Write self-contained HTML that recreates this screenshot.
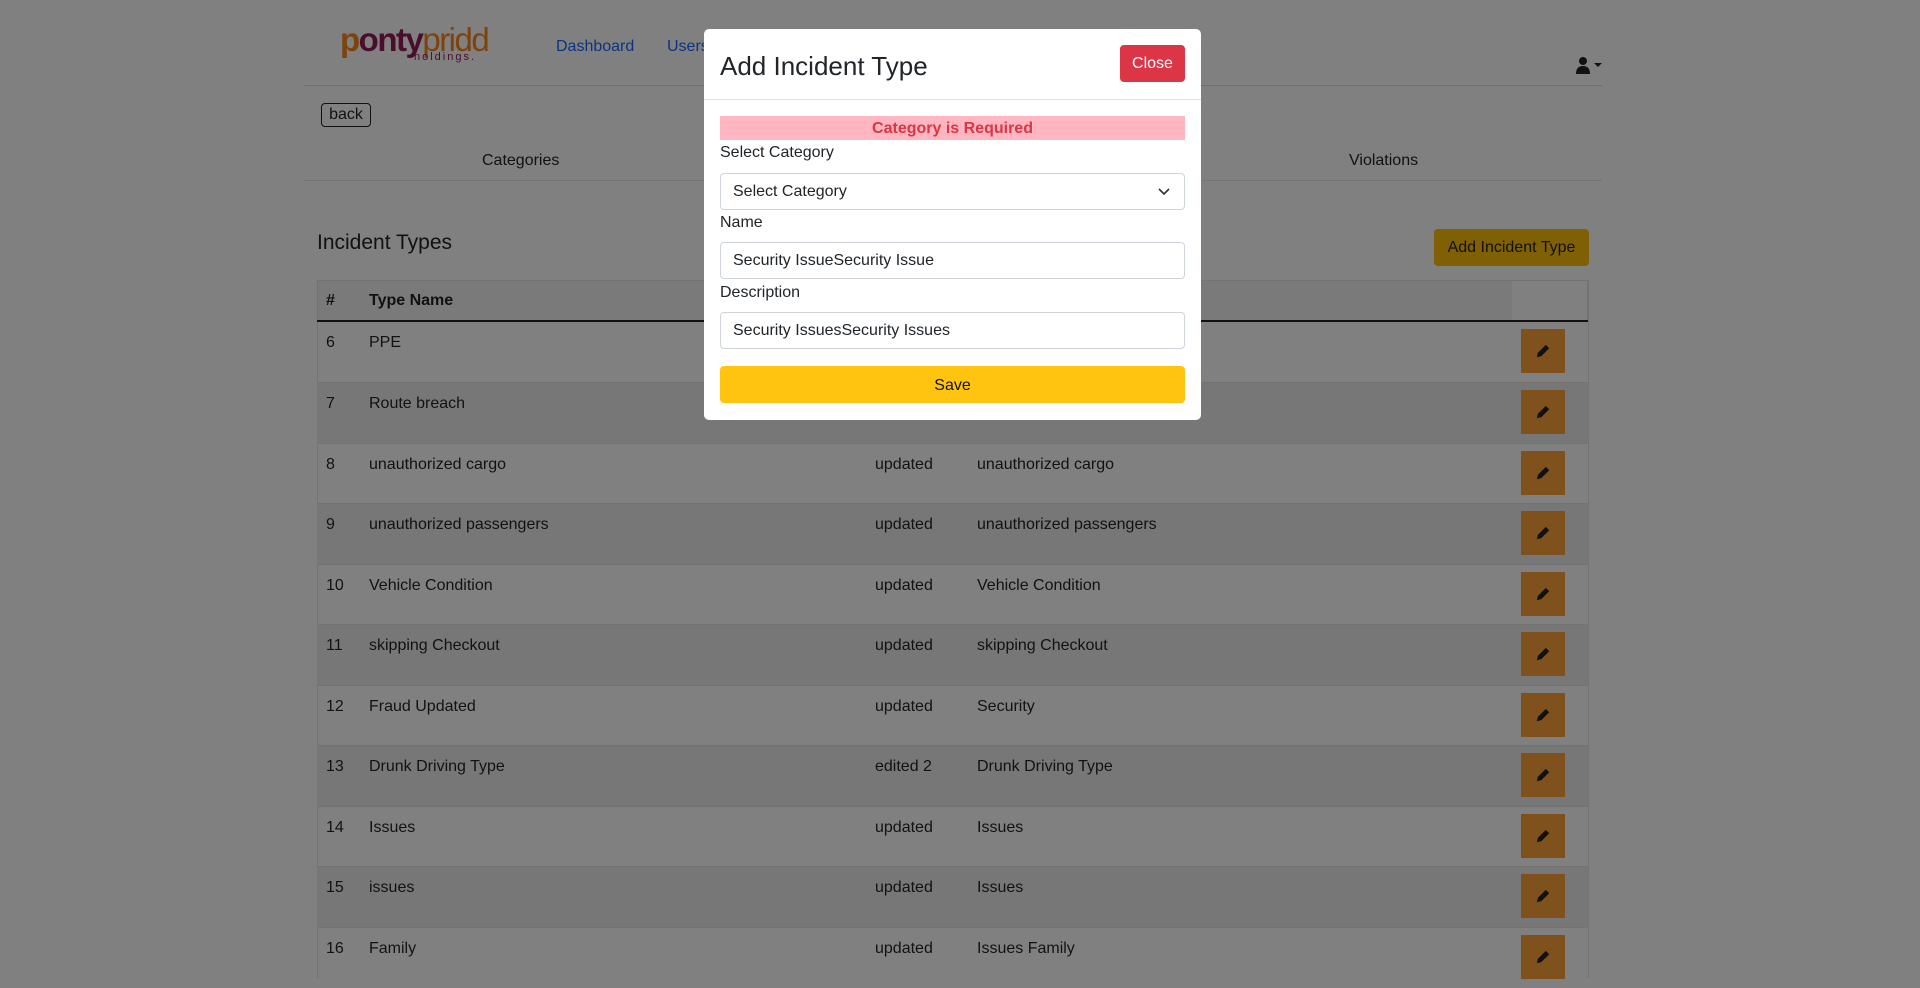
<!DOCTYPE html>
<html><head><meta charset="utf-8">
<style>
*{box-sizing:border-box;margin:0;padding:0}
body{width:1920px;height:978px;overflow:hidden;background:#808080;font-family:"Liberation Sans",sans-serif;color:#111;font-size:16px;position:relative}
.abs{position:absolute}
.nav a{color:#0a3480;text-decoration:none;font-size:16px}
.row{position:absolute;left:317px;width:1271px;height:61px;border-top:1px solid #737373}
.row span{position:absolute;top:12px;font-size:16px;color:#121212}
.edit{position:absolute;left:1204px;top:7px;width:44px;height:44px;background:#7f521d}
.edit svg{position:absolute;left:13px;top:13px}
.modal{position:absolute;left:704px;top:29px;width:497px;height:391px;background:#fff;border-radius:5px}
.lbl{position:absolute;left:16px;font-size:16px;color:#212529}
.inp{position:absolute;left:16px;width:465px;height:37px;border:1px solid #ced4da;border-radius:4px;padding:0 12px;line-height:35px;font-size:16px;color:#212529}
</style></head><body>
<div class="abs" style="left:340px;top:22px;font-size:33px;letter-spacing:-1.5px;line-height:36px">
<span style="color:#7e420c;font-weight:bold">p</span><span style="color:#4a0d2c;font-weight:bold">onty</span><span style="color:#7e420c">pridd</span></div>
<div class="abs" style="left:414px;top:51px;font-size:11px;color:#4a0d2c;letter-spacing:2px;line-height:12px">holdings.</div>
<div class="abs nav" style="left:556px;top:38px"><a>Dashboard</a></div>
<div class="abs nav" style="left:667px;top:38px"><a>Users</a></div>
<svg class="abs" style="left:1575px;top:56px" width="34" height="20" viewBox="0 0 34 20"><circle cx="8" cy="5" r="4" fill="#111"/><path d="M1 18 Q1 10 8 10 Q15 10 15 18Z" fill="#111"/><path d="M19 7 L27 7 L23 11Z" fill="#111"/></svg>
<div class="abs" style="left:304px;top:85px;width:1298px;height:1px;background:#707070"></div>
<div class="abs" style="left:321px;top:103px;width:50px;height:24px;border:1px solid #111;border-radius:4px;font-size:16px;text-align:center;line-height:22px;color:#111">back</div>
<div class="abs" style="left:482px;top:152px;font-size:16px;color:#111">Categories</div>
<div class="abs" style="left:1349px;top:152px;font-size:16px;color:#111">Violations</div>
<div class="abs" style="left:304px;top:180px;width:1298px;height:1px;background:#737373"></div>
<div class="abs" style="left:317px;top:231px;font-size:21px;color:#111">Incident Types</div>
<div class="abs" style="left:1434px;top:229px;width:155px;height:37px;background:#7f6005;border-radius:4px;font-size:16px;line-height:37px;text-align:center;color:#111">Add Incident Type</div>
<div class="abs" style="left:317px;top:280px;width:1271px;height:41px;background:#7a7a7a;border:1px solid #737373;border-bottom:none"></div>
<div class="abs" style="left:1512px;top:281px;width:75px;height:40px;background:#808080"></div>
<div class="abs" style="left:326px;top:292px;font-weight:bold">#</div>
<div class="abs" style="left:369px;top:292px;font-weight:bold">Type Name</div>
<div class="abs" style="left:317px;top:320px;width:1271px;height:2px;background:#111"></div>
<div class="abs" style="left:317px;top:322px;width:1px;height:656px;background:#737373"></div>
<div class="abs" style="left:1588px;top:280px;width:1px;height:698px;background:#737373"></div>

<div class="row" style="top:322px;border-top:none"><span style="left:9px">6</span><span style="left:52px">PPE</span><span style="left:558px">updated</span><span style="left:660px">PPE</span><div class="edit"><svg width="18" height="18" viewBox="0 0 16 16"><path d="M2.5 13.5 L3.5 9.5 L10.5 2.5 L13.5 5.5 L6.5 12.5Z" fill="#111"/></svg></div></div>
<div class="row" style="top:382px;background:#777"><span style="left:9px">7</span><span style="left:52px">Route breach</span><span style="left:558px">updated</span><span style="left:660px">Route breach</span><div class="edit"><svg width="18" height="18" viewBox="0 0 16 16"><path d="M2.5 13.5 L3.5 9.5 L10.5 2.5 L13.5 5.5 L6.5 12.5Z" fill="#111"/></svg></div></div>
<div class="row" style="top:443px"><span style="left:9px">8</span><span style="left:52px">unauthorized cargo</span><span style="left:558px">updated</span><span style="left:660px">unauthorized cargo</span><div class="edit"><svg width="18" height="18" viewBox="0 0 16 16"><path d="M2.5 13.5 L3.5 9.5 L10.5 2.5 L13.5 5.5 L6.5 12.5Z" fill="#111"/></svg></div></div>
<div class="row" style="top:503px;background:#777"><span style="left:9px">9</span><span style="left:52px">unauthorized passengers</span><span style="left:558px">updated</span><span style="left:660px">unauthorized passengers</span><div class="edit"><svg width="18" height="18" viewBox="0 0 16 16"><path d="M2.5 13.5 L3.5 9.5 L10.5 2.5 L13.5 5.5 L6.5 12.5Z" fill="#111"/></svg></div></div>
<div class="row" style="top:564px"><span style="left:9px">10</span><span style="left:52px">Vehicle Condition</span><span style="left:558px">updated</span><span style="left:660px">Vehicle Condition</span><div class="edit"><svg width="18" height="18" viewBox="0 0 16 16"><path d="M2.5 13.5 L3.5 9.5 L10.5 2.5 L13.5 5.5 L6.5 12.5Z" fill="#111"/></svg></div></div>
<div class="row" style="top:624px;background:#777"><span style="left:9px">11</span><span style="left:52px">skipping Checkout</span><span style="left:558px">updated</span><span style="left:660px">skipping Checkout</span><div class="edit"><svg width="18" height="18" viewBox="0 0 16 16"><path d="M2.5 13.5 L3.5 9.5 L10.5 2.5 L13.5 5.5 L6.5 12.5Z" fill="#111"/></svg></div></div>
<div class="row" style="top:685px"><span style="left:9px">12</span><span style="left:52px">Fraud Updated</span><span style="left:558px">updated</span><span style="left:660px">Security</span><div class="edit"><svg width="18" height="18" viewBox="0 0 16 16"><path d="M2.5 13.5 L3.5 9.5 L10.5 2.5 L13.5 5.5 L6.5 12.5Z" fill="#111"/></svg></div></div>
<div class="row" style="top:745px;background:#777"><span style="left:9px">13</span><span style="left:52px">Drunk Driving Type</span><span style="left:558px">edited 2</span><span style="left:660px">Drunk Driving Type</span><div class="edit"><svg width="18" height="18" viewBox="0 0 16 16"><path d="M2.5 13.5 L3.5 9.5 L10.5 2.5 L13.5 5.5 L6.5 12.5Z" fill="#111"/></svg></div></div>
<div class="row" style="top:806px"><span style="left:9px">14</span><span style="left:52px">Issues</span><span style="left:558px">updated</span><span style="left:660px">Issues</span><div class="edit"><svg width="18" height="18" viewBox="0 0 16 16"><path d="M2.5 13.5 L3.5 9.5 L10.5 2.5 L13.5 5.5 L6.5 12.5Z" fill="#111"/></svg></div></div>
<div class="row" style="top:866px;background:#777"><span style="left:9px">15</span><span style="left:52px">issues</span><span style="left:558px">updated</span><span style="left:660px">Issues</span><div class="edit"><svg width="18" height="18" viewBox="0 0 16 16"><path d="M2.5 13.5 L3.5 9.5 L10.5 2.5 L13.5 5.5 L6.5 12.5Z" fill="#111"/></svg></div></div>
<div class="row" style="top:927px"><span style="left:9px">16</span><span style="left:52px">Family</span><span style="left:558px">updated</span><span style="left:660px">Issues Family</span><div class="edit"><svg width="18" height="18" viewBox="0 0 16 16"><path d="M2.5 13.5 L3.5 9.5 L10.5 2.5 L13.5 5.5 L6.5 12.5Z" fill="#111"/></svg></div></div>

<div class="modal">
<div class="abs" style="left:16px;top:22px;font-size:26px;color:#212529">Add Incident Type</div>
<div class="abs" style="left:416px;top:16px;width:65px;height:37px;background:#dc3545;border-radius:4px;color:#fff;font-size:16px;line-height:37px;text-align:center">Close</div>
<div class="abs" style="left:0;top:70px;width:497px;height:1px;background:#dee2e6"></div>
<div class="abs" style="left:16px;top:87px;width:465px;height:24px;background:#ffb6c1;color:#dc3545;font-weight:bold;text-align:center;font-size:16px;line-height:26px">Category is Required</div>
<div class="lbl" style="top:115px">Select Category</div>
<div class="inp" style="top:144px">Select Category<svg style="position:absolute;right:14px;top:14px" width="12" height="8" viewBox="0 0 12 8"><path d="M1 1 L6 6 L11 1" stroke="#333" stroke-width="1.6" fill="none"/></svg></div>
<div class="lbl" style="top:185px">Name</div>
<div class="inp" style="top:213px">Security IssueSecurity Issue</div>
<div class="lbl" style="top:255px">Description</div>
<div class="inp" style="top:283px">Security IssuesSecurity Issues</div>
<div class="abs" style="left:16px;top:337px;width:465px;height:37px;background:#ffc410;border-radius:4px;text-align:center;line-height:39px;color:#111;font-size:16px">Save</div>
</div>
</body></html>
